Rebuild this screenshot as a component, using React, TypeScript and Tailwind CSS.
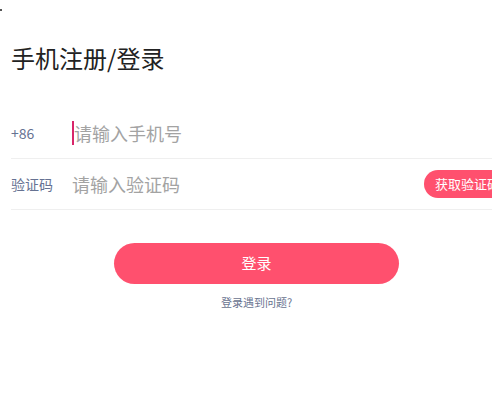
import React from "react";

export default function App() {
  return (
    <div
      className="relative w-[492px] h-[415px] overflow-hidden bg-white"
      style={{ fontFamily: '"Noto Sans CJK SC", "Noto Sans", sans-serif' }}
    >
      <div className="absolute left-0 top-[9px] w-[2px] h-[2px] bg-[#555]" />
      <div className="pl-[11px]">
        <div className="w-[491px]">
          <h1 className="pt-[40px] text-[24px] leading-[36px] text-[#222] font-normal">
            手机注册/登录
          </h1>
          <div className="mt-[32px] flex items-center h-[51px] border-b border-[#efefef]">
            <span className="w-[61px] text-[14px] text-[#667292]">+86</span>
            <span className="w-[2px] h-[24px] bg-[#d8266a]" />
            <span className="text-[18px] text-[#a3a3a3]">请输入手机号</span>
          </div>
          <div className="flex items-center h-[51px] border-b border-[#efefef]">
            <span className="w-[61px] text-[14px] text-[#667292]">验证码</span>
            <span className="flex-1 text-[18px] text-[#a3a3a3]">请输入验证码</span>
            <span className="shrink-0 mr-[-9px] h-[28px] px-[11px] rounded-full bg-[#ff506e] text-white text-[13px] leading-[28px] whitespace-nowrap">
              获取验证码
            </span>
          </div>
          <button className="mt-[33px] mx-auto flex items-center justify-center w-[285px] h-[41px] rounded-full bg-[#ff506e] text-white text-[15px]">
            登录
          </button>
          <p className="mt-[10px] text-center text-[11px] leading-[16px] text-[#69738f]">
            登录遇到问题?
          </p>
        </div>
      </div>
    </div>
  );
}
